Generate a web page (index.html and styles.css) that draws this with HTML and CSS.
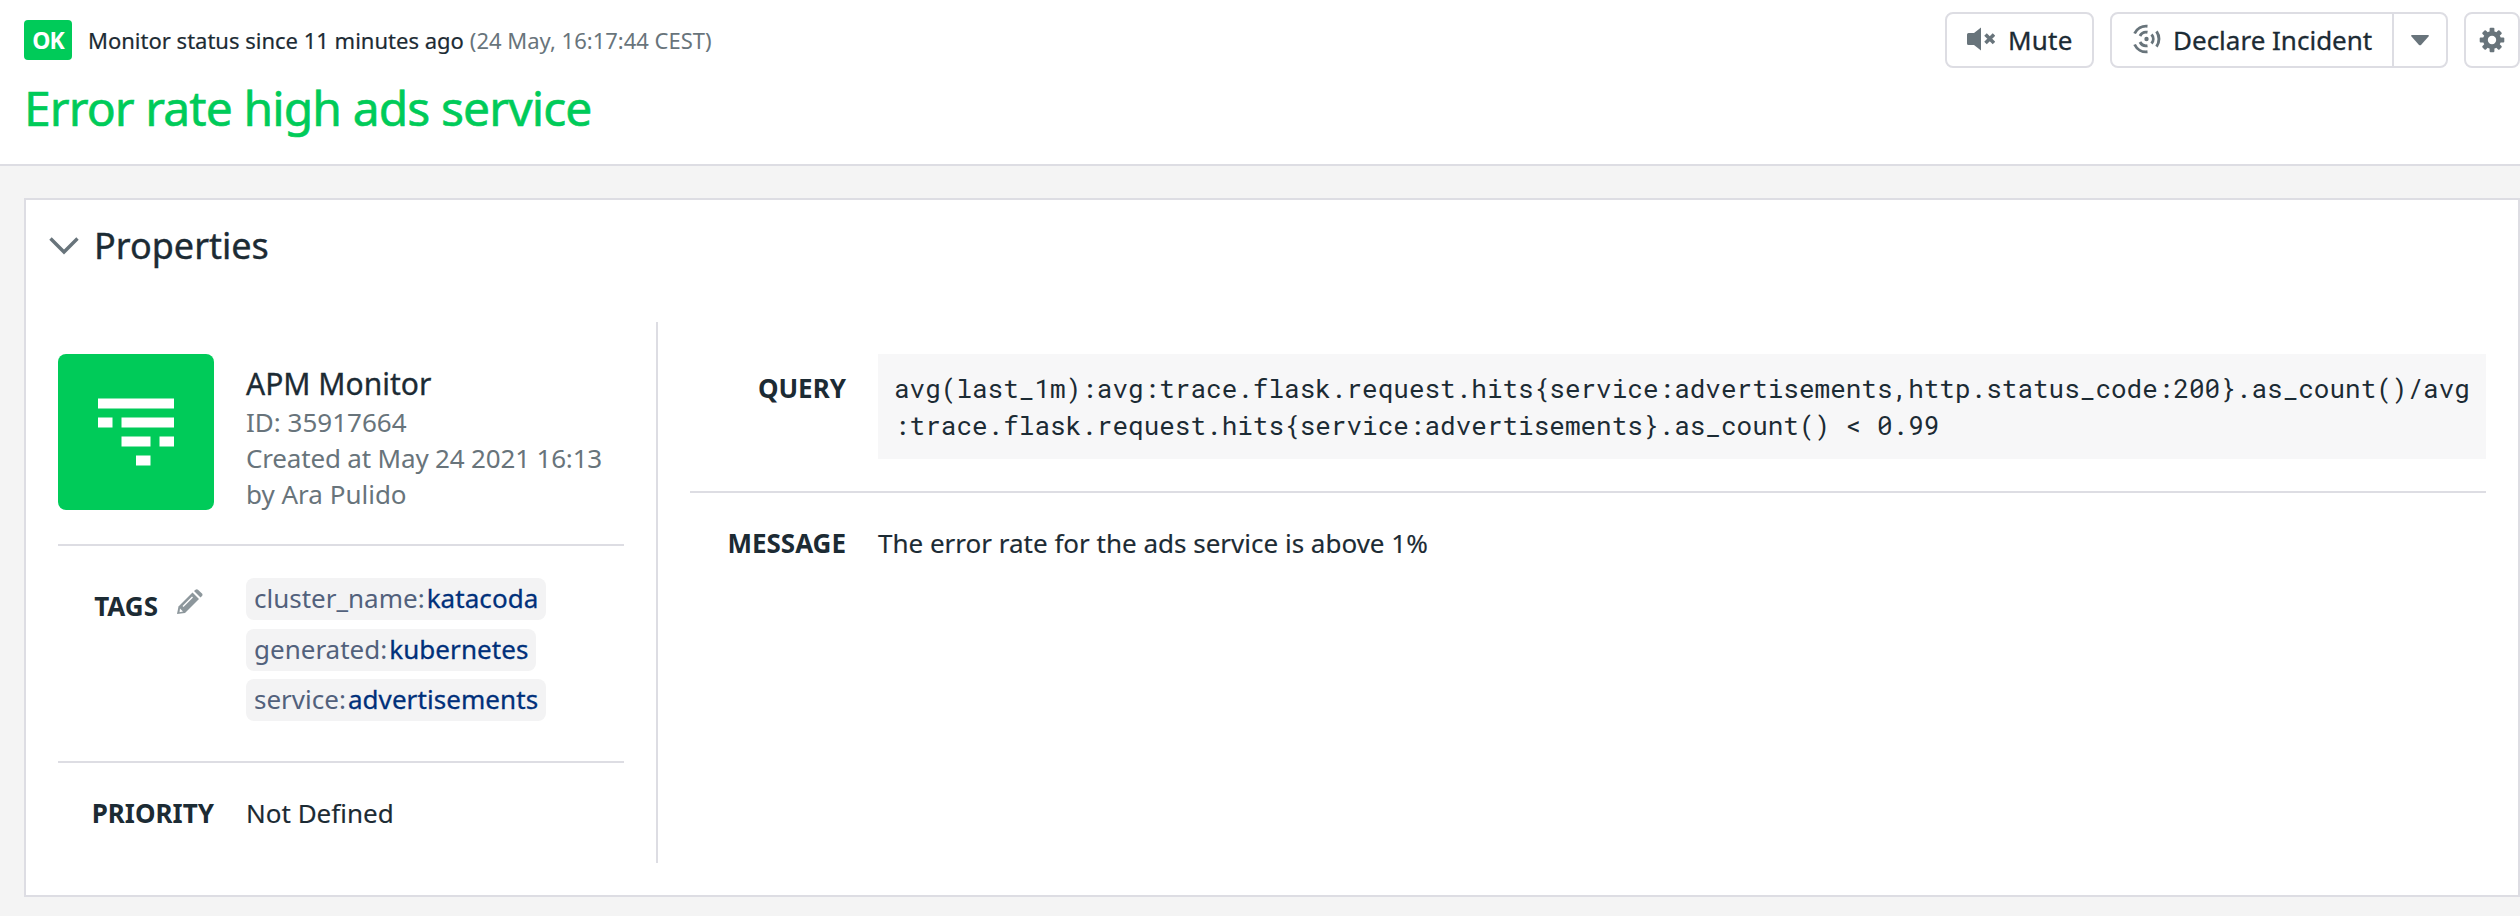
FILE: index.html
```html
<!DOCTYPE html>
<html lang="en">
<head>
<meta charset="utf-8">
<title>Error rate high ads service</title>
<link rel="stylesheet" href="styles.css">
</head>
<body>
<header class="header">
  <div class="heading">
    <div class="status">
      <span class="badge">OK</span>
      <span class="since">Monitor status since 11 minutes ago</span>
      <span class="when">(24 May, 16:17:44 CEST)</span>
    </div>
    <h1 class="title">Error rate high ads service</h1>
  </div>
  <div class="actions">
    <button class="btn btn-mute">
      <svg class="icon-mute" width="28" height="24" viewBox="0 0 28 24"><path fill="#68747b" d="M0 7.500a1.500 1.500 0 0 1 1.500-1.500H7L14 .6V23.400L7 18H1.500A1.500 1.500 0 0 1 0 16.500Z"/><path stroke="#68747b" stroke-width="3.600" d="M18.500 7.500l8.500 8.500M27 7.500l-8.500 8.500"/></svg>
      <span class="mute-text">Mute</span>
    </button>
    <div class="group">
      <button class="btn btn-declare">
        <svg class="icon-declare" width="28" height="30" viewBox="0 0 28 30" fill="none" stroke="#68747b" stroke-width="2.900"><circle cx="13.500" cy="15" r="2.200" fill="#68747b" stroke="none"/><path d="M14.500 2.200A12.800 12.800 0 0 0 1.600 9.500M14.500 8.300A7 7 0 0 0 7 12M1.600 20.500A12.800 12.800 0 0 0 14.500 27.800M7 18A7 7 0 0 0 14.500 21.700M18.500 10.600A6.500 6.500 0 0 1 18.500 19.400M23.500 7.400A13 13 0 0 1 23.500 22.600"/></svg>
        <span class="declare-text">Declare Incident</span>
      </button>
      <button class="btn btn-caret"><svg width="18" height="11" viewBox="0 0 18 11"><path fill="#68747b" d="M1 0H17Q18.500 0 17.500 1.400L10 9.900Q9 10.800 8 9.900L.5 1.400Q-.5 0 1 0Z"/></svg></button>
    </div>
    <button class="btn btn-gear"><svg width="26" height="26" viewBox="-13 -13 26 26"><g fill="#68747b"><circle r="9"/><rect x="-2.400" y="-12.300" width="4.800" height="24.600" rx="1"/><rect x="-12.300" y="-2.400" width="24.600" height="4.800" rx="1"/><g transform="rotate(45)"><rect x="-2.400" y="-12" width="4.800" height="24" rx="1"/><rect x="-12" y="-2.400" width="24" height="4.800" rx="1"/></g></g><circle r="4.200" fill="#fff"/></svg></button>
  </div>
</header>
<main class="card">
  <h2 class="card-title">
    <svg width="30" height="18" viewBox="0 0 30 18" fill="none" stroke="#68747b" stroke-width="3.400"><path d="M1.500 1.500L15 15L28.500 1.500"/></svg>
    <span>Properties</span>
  </h2>
  <div class="columns">
    <section class="left">
      <div class="monitor">
        <svg class="tile" width="156" height="156" viewBox="0 0 156 156"><rect width="156" height="156" rx="8" fill="#00cb59"/><path fill="#fff" d="M40 44.500h76v10H40zM40 63.500h14.500v10H40zM63.500 63.500H116v10H63.500zM63.500 82.500h29v10h-29zM101.500 82.500H116v10h-14.500zM78 101.500h14.500v10H78z"/></svg>
        <div class="meta">
          <div class="kind">APM Monitor</div>
          <div>ID: 35917664</div>
          <div class="created">Created at May 24 2021 16:13</div>
          <div>by Ara Pulido</div>
        </div>
      </div>
      <div class="row tags-row">
        <div class="label">TAGS <svg class="pencil" width="26" height="26" viewBox="0 0 26 26"><path fill="#8d979c" d="M0 25L1.500 17.500L15.500 3.500L22 10L8 24Z"/><path fill="#8d979c" d="M17 2L18.500.7Q19.800-.4 21 .7L25 4.500Q26 5.700 25 7L23.500 8.500Z"/><path stroke="#fff" stroke-width="1.500" d="M6 17.500L15.500 8"/><path fill="#fff" d="M3 19.500L6 22.500L2.500 23.300Z"/></svg></div>
        <div class="tags">
          <span class="tag">cluster_name:<b>katacoda</b></span>
          <span class="tag">generated:<b>kubernetes</b></span>
          <span class="tag">service:<b>advertisements</b></span>
        </div>
      </div>
      <div class="row priority-row">
        <div class="label">PRIORITY</div>
        <div class="value">Not Defined</div>
      </div>
    </section>
    <section class="right">
      <div class="row query-row">
        <div class="label">QUERY</div>
        <code class="query">avg(last_1m):avg:trace.flask.request.hits{service:advertisements,http.status_code:200}.as_count()/avg<br>:trace.flask.request.hits{service:advertisements}.as_count() &lt; 0.99</code>
      </div>
      <div class="row message-row">
        <div class="label">MESSAGE</div>
        <div class="value">The error rate for the ads service is above 1%</div>
      </div>
    </section>
  </div>
</main>
</body>
</html>
```
FILE: styles.css
```css
* { box-sizing: border-box; }
body {
  margin: 0;
  height: 916px;
  overflow: hidden;
  background: #f4f4f4;
  color: #1c2b34;
  font: 26px/36px "Noto Sans", sans-serif;
}
svg { display: block; flex: none; }
.header {
  display: flex;
  justify-content: space-between;
  height: 166px;
  padding: 12px 0 0 24px;
  background: #fff;
  border-bottom: 2px solid #dddde3;
}
.heading { padding-top: 8px; white-space: nowrap; }
.status { display: flex; align-items: center; height: 40px; font-size: 22px; }
.badge {
  width: 48px;
  height: 40px;
  margin-right: 16px;
  border-radius: 4px;
  background: #00cb59;
  color: #fff;
  font-size: 23px;
  font-weight: 700;
  letter-spacing: -1px;
  line-height: 41px;
  text-align: center;
}
.since { margin-right: 6px; -webkit-text-stroke: 0.2px #1c2b34; }
.when { color: #68747b; }
.title {
  margin: 15px 0 0;
  color: #00cb59;
  font-size: 48px;
  font-weight: 400;
  line-height: 66px;
  letter-spacing: -0.9px;
  -webkit-text-stroke: 0.6px #00cb59;
}
.actions { display: flex; gap: 16px; height: 56px; }
.btn {
  display: flex;
  align-items: center;
  height: 56px;
  padding: 0;
  border: 2px solid #dddde3;
  border-radius: 8px;
  background: #fff;
  color: #1c2b34;
  font: 400 26px/36px "Noto Sans", sans-serif;
  -webkit-text-stroke: 0.3px #1c2b34;
  white-space: nowrap;
}
.btn-mute { width: 149px; padding-left: 20px; gap: 13px; }
.mute-text { letter-spacing: 0.2px; }
.icon-mute { margin-top: -3px; }
.group { display: flex; }
.btn-declare { width: 284px; padding-left: 21px; gap: 12px; border-radius: 8px 0 0 8px; }
.icon-declare { margin-top: -2px; }
.btn-caret { width: 56px; margin-left: -2px; justify-content: center; border-radius: 0 8px 8px 0; }
.btn-gear { width: 56px; justify-content: center; }
.card {
  margin: 32px 0 0 24px;
  height: 699px;
  border: 2px solid #dddde3;
  background: #fff;
}
.card-title {
  display: flex;
  align-items: center;
  gap: 15px;
  height: 50px;
  margin: 21px 0 0 23px;
  font-size: 36px;
  font-weight: 400;
  line-height: 50px;
  -webkit-text-stroke: 0.4px #1c2b34;
}
.columns { display: flex; margin-top: 51px; height: 541px; }
.left { width: 632px; padding: 32px 32px 0; border-right: 2px solid #dddde3; }
.monitor { display: flex; gap: 32px; height: 192px; border-bottom: 2px solid #dddde3; }
.meta { color: #68747b; white-space: nowrap; padding-top: 10px; }
.created { letter-spacing: -0.17px; }
.kind {
  color: #1c2b34;
  font-size: 30px;
  line-height: 40px;
  -webkit-text-stroke: 0.3px #1c2b34;
}
.row { display: flex; gap: 32px; }
.label {
  display: flex;
  justify-content: flex-end;
  width: 156px;
  flex: none;
  font-weight: 700;
}
.tags-row { height: 217px; padding-top: 32px; border-bottom: 2px solid #dddde3; }
.tags-row .label { padding: 10px 11px 0 0; gap: 19px; }
.pencil { margin-top: 1px; }
.tags { display: flex; flex-direction: column; align-items: flex-start; gap: 8.500px; }
.tag {
  height: 42px;
  padding: 0 8px;
  border-radius: 8px;
  background: #f3f3f4;
  color: #52617c;
  line-height: 40px;
}
.tag b {
  margin-left: 2px;
  color: #00307a;
  font-weight: 400;
  letter-spacing: 0.07px;
  -webkit-text-stroke: 0.3px #00307a;
}
.value { -webkit-text-stroke: 0.15px #1c2b34; }
.priority-row { padding-top: 32px; }
.right { flex: 1; padding: 32px 32px 0; }
.query-row { height: 139px; border-bottom: 2px solid #dddde3; }
.query-row .label { padding-top: 16px; }
.query {
  flex: 1;
  height: 105px;
  padding: 16px;
  background: #f7f7f8;
  font: 26px/37px "Roboto Mono", "DejaVu Sans Mono", monospace;
  white-space: nowrap;
}
.message-row { padding-top: 32px; }
```
